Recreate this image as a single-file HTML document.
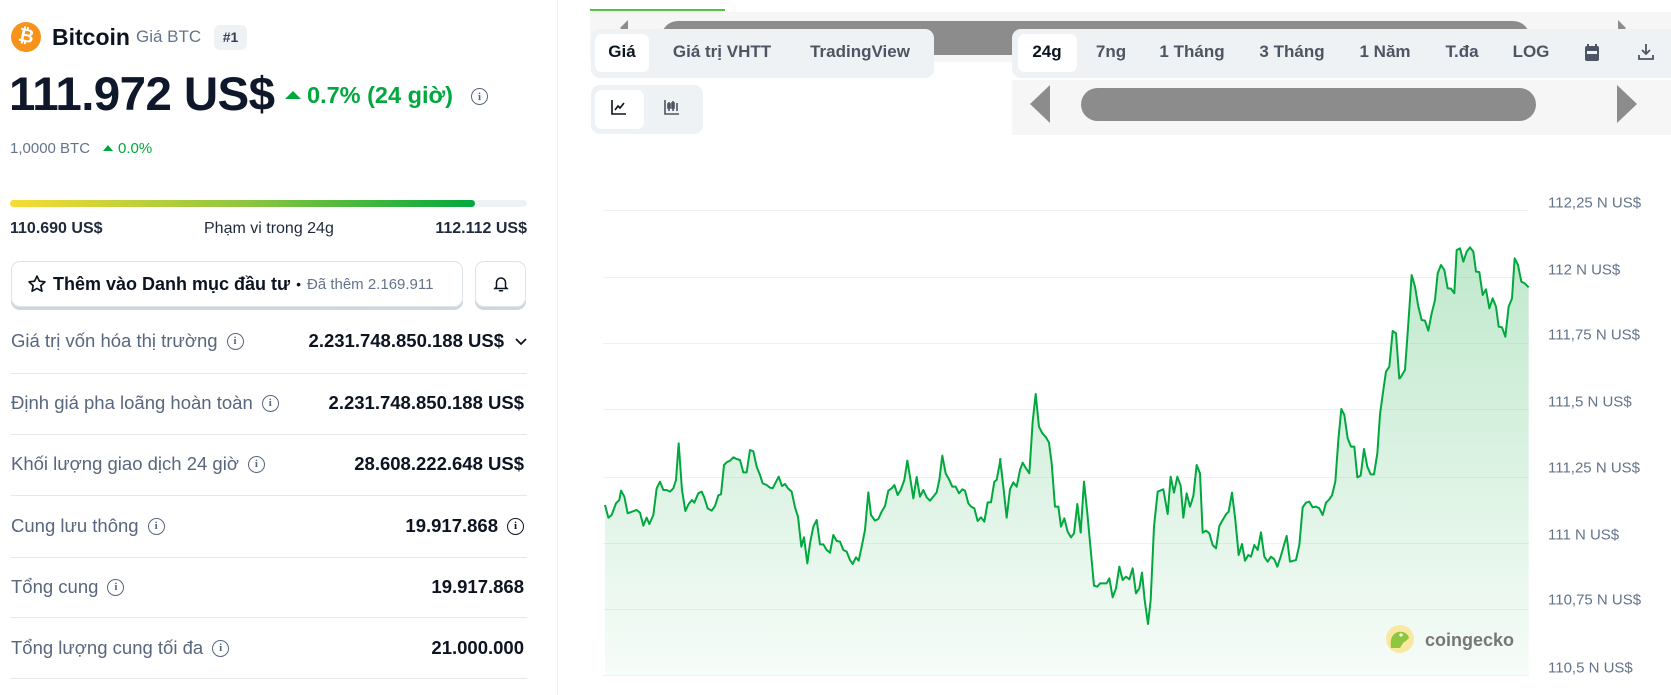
<!DOCTYPE html>
<html><head><meta charset="utf-8"><style>
*{margin:0;padding:0;box-sizing:border-box}
body{width:1671px;height:695px;overflow:hidden;background:#fff;font-family:"Liberation Sans",sans-serif;color:#0d1421;position:relative}
.a{position:absolute;white-space:nowrap}
.lbl{font-size:18.5px;color:#58667e;display:flex;align-items:center;gap:9px}
.val{font-size:18.5px;font-weight:bold;color:#0d1421;right:1147px;display:flex;align-items:center;gap:9px}
.info{width:17px;height:17px;border:1.6px solid #58667e;border-radius:50%;font-size:11px;font-weight:bold;color:#58667e;display:inline-flex;align-items:center;justify-content:center;font-family:"Liberation Serif",serif}
.hr{position:absolute;left:11px;width:516px;height:1px;background:#e5e8ec}
.tab{position:absolute;font-size:17px;color:#4b5563;transform:translateX(-50%);top:42px}
.yl{position:absolute;left:1548px;font-size:15px;color:#64748b;transform:translateY(-50%)}
.grid{position:absolute;left:603px;width:926px;height:1px;background:rgba(120,140,150,0.12)}
</style></head><body>
<!-- header -->
<div class="a" style="left:11px;top:22px;width:30px;height:30px;border-radius:50%;background:#f7931a;color:#fff;font-weight:bold;font-size:19px;text-align:center;line-height:30px;transform:rotate(12deg)">₿</div>
<div class="a" style="left:52px;top:24px;font-size:23px;font-weight:bold">Bitcoin</div>
<div class="a" style="left:136px;top:27px;font-size:17px;color:#64748b">Giá BTC</div>
<div class="a" style="left:214px;top:25px;width:33px;height:25px;background:#eff2f5;border-radius:6px;font-size:14px;font-weight:bold;color:#334155;text-align:center;line-height:25px">#1</div>
<div class="a" style="left:9px;top:67px;font-size:47.5px;font-weight:bold;letter-spacing:-0.6px;color:#0f172a">111.972 US$</div>
<div class="a" style="left:285px;top:91px;width:0;height:0;border-left:8px solid transparent;border-right:8px solid transparent;border-bottom:8px solid #00a83e"></div>
<div class="a" style="left:307px;top:82px;font-size:23.5px;font-weight:bold;color:#00a83e">0.7% (24 giờ)</div>
<div class="a info" style="left:471px;top:88px">i</div>
<div class="a" style="left:10px;top:140px;font-size:15px;color:#64748b">1,0000 BTC</div>
<div class="a" style="left:103px;top:145px;width:0;height:0;border-left:5px solid transparent;border-right:5px solid transparent;border-bottom:6px solid #00a83e"></div>
<div class="a" style="left:118px;top:140px;font-size:15px;color:#00a83e">0.0%</div>
<!-- range -->
<div class="a" style="left:10px;top:200px;width:517px;height:7px;border-radius:4px;background:#eff2f5"></div>
<div class="a" style="left:10px;top:200px;width:465px;height:7px;border-radius:4px;background:linear-gradient(90deg,#f8dc34,#8fc63f 50%,#00a83e)"></div>
<div class="a" style="left:10px;top:220px;font-size:16px;font-weight:bold;color:#1e293b">110.690 US$</div>
<div class="a" style="left:204px;top:220px;font-size:16px;color:#1e293b">Phạm vi trong 24g</div>
<div class="a" style="right:1144px;top:220px;font-size:16px;font-weight:bold;color:#1e293b">112.112 US$</div>
<!-- buttons -->
<div class="a" style="left:11px;top:261px;width:452px;height:46px;border:1.5px solid #dfe3ea;border-radius:9px;box-shadow:0 3px 0 #cfd6df;display:flex;align-items:center;padding-left:15px;gap:6px">
<svg width="20" height="20" viewBox="0 0 24 24"><path d="M12 2.5l2.9 6.1 6.6.8-4.9 4.6 1.3 6.6L12 17.3l-5.9 3.3 1.3-6.6-4.9-4.6 6.6-.8z" fill="none" stroke="#0d1421" stroke-width="2" stroke-linejoin="round"/></svg>
<span style="font-size:18px;font-weight:bold">Thêm vào Danh mục đầu tư</span><span style="font-size:14px;color:#0d1421">•</span><span style="font-size:15px;color:#64748b">Đã thêm 2.169.911</span></div>
<div class="a" style="left:475px;top:261px;width:51px;height:46px;border:1.5px solid #dfe3ea;border-radius:9px;box-shadow:0 3px 0 #cfd6df;display:flex;align-items:center;justify-content:center">
<svg width="18" height="18" viewBox="0 0 24 24" fill="none" stroke="#0d1421" stroke-width="2" stroke-linecap="round"><path d="M6 16V10a6 6 0 0112 0v6l2 2H4z"/><path d="M10 21h4"/></svg></div>
<!-- stats -->
<div class="a lbl" style="left:11px;top:330px">Giá trị vốn hóa thị trường <span class="info">i</span></div>
<div class="a val" style="top:330px;right:1142px">2.231.748.850.188 US$ <svg width="16" height="16" viewBox="0 0 16 16"><path d="M3 6l5 5 5-5" fill="none" stroke="#0d1421" stroke-width="1.8"/></svg></div>
<div class="hr" style="top:373px"></div>
<div class="a lbl" style="left:11px;top:392px">Định giá pha loãng hoàn toàn <span class="info">i</span></div>
<div class="a val" style="top:392px">2.231.748.850.188 US$</div>
<div class="hr" style="top:434px"></div>
<div class="a lbl" style="left:11px;top:453px">Khối lượng giao dịch 24 giờ <span class="info">i</span></div>
<div class="a val" style="top:453px">28.608.222.648 US$</div>
<div class="hr" style="top:495px"></div>
<div class="a lbl" style="left:11px;top:515px">Cung lưu thông <span class="info">i</span></div>
<div class="a val" style="top:515px">19.917.868 <span class="info" style="border-color:#0d1421;color:#0d1421">i</span></div>
<div class="hr" style="top:557px"></div>
<div class="a lbl" style="left:11px;top:576px">Tổng cung <span class="info">i</span></div>
<div class="a val" style="top:576px">19.917.868</div>
<div class="hr" style="top:617px"></div>
<div class="a lbl" style="left:11px;top:637px">Tổng lượng cung tối đa <span class="info">i</span></div>
<div class="a val" style="top:637px">21.000.000</div>
<div class="hr" style="top:678px"></div>
<div class="a" style="left:557px;top:0;width:1px;height:695px;background:#eef0f3"></div>
<!-- top scroll bar -->
<div class="a" style="left:590px;top:9px;width:135px;height:2px;background:#4cc93b"></div>
<div class="a" style="left:590px;top:12px;width:1081px;height:50px;background:#f6f6f6"></div>
<div class="a" style="left:661px;top:21px;width:869px;height:34px;border-radius:17px;background:#8c8c8c"></div>
<div class="a" style="left:620px;top:20px;width:0;height:0;border-top:8px solid transparent;border-bottom:8px solid transparent;border-right:8px solid #8c8c8c"></div>
<div class="a" style="left:1618px;top:20px;width:0;height:0;border-top:8px solid transparent;border-bottom:8px solid transparent;border-left:8px solid #8c8c8c"></div>
<!-- tab group 1 -->
<div class="a" style="left:591px;top:29px;width:343px;height:49px;background:#eff2f5;border-radius:9px"></div>
<div class="a" style="left:595px;top:34px;width:54px;height:38px;background:#fff;border-radius:7px"></div>
<div class="tab" style="left:622px;color:#0d1421;font-weight:bold">Giá</div>
<div class="tab" style="left:722px;font-weight:bold">Giá trị VHTT</div>
<div class="tab" style="left:860px;font-weight:bold">TradingView</div>
<div class="a" style="left:591px;top:85px;width:112px;height:49px;background:#eff2f5;border-radius:9px"></div>
<div class="a" style="left:595px;top:90px;width:49px;height:39px;background:#fff;border-radius:7px"></div>
<svg class="a" style="left:609px;top:97px" width="20" height="20" viewBox="0 0 20 20" fill="none" stroke="#0d1421" stroke-width="1.6"><path d="M3 3v14h14"/><path d="M6 13l3-4 2 2 4-5"/></svg>
<svg class="a" style="left:662px;top:97px" width="20" height="20" viewBox="0 0 20 20" fill="none" stroke="#4b5563" stroke-width="1.6"><path d="M3 3v14h14"/><path d="M7 5v9M11 4v10M15 6v8"/><rect x="6" y="7" width="2" height="4" fill="#4b5563"/><rect x="10" y="6" width="2" height="5" fill="#4b5563"/></svg>
<!-- timeframe group -->
<div class="a" style="left:1012px;top:29px;width:659px;height:49px;background:#eff2f5;border-radius:9px 0 0 9px"></div>
<div class="a" style="left:1018px;top:34px;width:59px;height:38px;background:#fff;border-radius:7px"></div>
<div class="tab" style="left:1047px;color:#0d1421;font-weight:bold">24g</div>
<div class="tab" style="left:1111px;font-weight:bold">7ng</div>
<div class="tab" style="left:1192px;font-weight:bold">1 Tháng</div>
<div class="tab" style="left:1292px;font-weight:bold">3 Tháng</div>
<div class="tab" style="left:1385px;font-weight:bold">1 Năm</div>
<div class="tab" style="left:1462px;font-weight:bold">T.đa</div>
<div class="tab" style="left:1531px;font-weight:bold">LOG</div>
<svg class="a" style="left:1583px;top:43px" width="18" height="20" viewBox="0 0 18 20"><rect x="2" y="3" width="14" height="15" rx="2" fill="#4b5563"/><rect x="4" y="8" width="10" height="3" fill="#eff2f5"/><path d="M5 1v4M13 1v4" stroke="#4b5563" stroke-width="2"/></svg>
<svg class="a" style="left:1636px;top:42px" width="20" height="20" viewBox="0 0 20 20" fill="none" stroke="#4b5563" stroke-width="1.8"><path d="M10 2v10M6 8l4 4 4-4M3 13v4h14v-4"/></svg>
<div class="a" style="left:1012px;top:80px;width:659px;height:55px;background:#f6f6f6"></div>
<div class="a" style="left:1030px;top:85px;width:0;height:0;border-top:19px solid transparent;border-bottom:19px solid transparent;border-right:20px solid #8c8c8c"></div>
<div class="a" style="left:1081px;top:88px;width:455px;height:33px;border-radius:17px;background:#8c8c8c"></div>
<div class="a" style="left:1617px;top:85px;width:0;height:0;border-top:19px solid transparent;border-bottom:19px solid transparent;border-left:20px solid #8c8c8c"></div>
<div class="yl" style="top:203px">112,25 N US$</div>
<div class="yl" style="top:270px">112 N US$</div>
<div class="yl" style="top:335px">111,75 N US$</div>
<div class="yl" style="top:402px">111,5 N US$</div>
<div class="yl" style="top:468px">111,25 N US$</div>
<div class="yl" style="top:535px">111 N US$</div>
<div class="yl" style="top:600px">110,75 N US$</div>
<div class="yl" style="top:668px">110,5 N US$</div>
<svg class="a" style="left:0;top:0" width="1671" height="695">
<defs>
<linearGradient id="g1" gradientUnits="userSpaceOnUse" x1="0" y1="60" x2="0" y2="1365"><stop offset="0" stop-color="#bfe8cc"/><stop offset="1" stop-color="#f6fcf8"/></linearGradient>
<linearGradient id="g3" gradientUnits="userSpaceOnUse" x1="0" y1="210" x2="0" y2="1515"><stop offset="0" stop-color="#bfe8cc"/><stop offset="1" stop-color="#f6fcf8"/></linearGradient>
</defs>
<g transform="translate(560,220) scale(0.33333)">
<polygon fill="url(#g1)" points="135,1365 135,855 145,893 155,885 168,850 178,840 183,812 193,830 203,880 230,870 240,878 250,917 260,893 268,912 280,885 290,805 300,785 310,810 320,810 330,815 340,805 348,780 356,670 366,810 376,873 386,852 396,840 403,848 415,820 425,815 432,830 443,865 455,872 465,858 475,826 483,823 492,735 500,727 510,722 520,712 530,717 540,720 550,757 560,757 570,690 580,694 590,740 600,765 608,790 620,795 630,803 638,805 656,770 666,798 675,792 684,805 695,815 705,862 714,890 724,980 732,952 742,1030 750,970 760,920 770,900 780,973 790,973 800,990 810,998 820,945 830,963 840,965 850,990 860,995 870,1020 878,1032 888,1012 896,1022 905,980 915,930 925,817 933,885 945,902 955,897 965,875 975,858 985,812 995,805 1003,795 1013,825 1023,808 1033,780 1042,722 1050,770 1060,835 1070,771 1080,830 1090,810 1100,832 1110,842 1120,830 1130,817 1138,780 1147,707 1157,760 1167,778 1177,800 1187,800 1197,820 1207,808 1215,812 1225,850 1233,860 1243,865 1253,903 1263,892 1273,905 1283,847 1293,847 1303,785 1310,780 1322,715 1330,760 1330,1365"/>
</g>
<g transform="translate(1000,220) scale(0.33333)">
<polygon fill="url(#g1)" points="0,1365 0,715 10,800 20,893 30,808 40,787 50,800 60,750 68,728 78,745 88,760 98,605 107,522 117,620 127,640 138,652 147,668 155,730 165,860 175,860 183,920 193,895 203,935 213,952 222,940 232,852 242,938 252,785 262,880 282,1097 292,1100 300,1090 320,1090 328,1075 338,1132 348,1105 358,1040 368,1080 378,1070 388,1078 398,1045 408,1120 418,1105 426,1058 434,1140 444,1212 452,1140 462,920 473,815 490,808 503,882 512,770 522,818 532,770 542,797 550,893 560,820 570,860 580,828 590,735 600,760 608,938 618,932 628,940 638,975 648,985 658,918 668,900 678,883 686,875 696,818 706,900 716,1005 726,972 735,1022 745,1005 753,1010 763,975 773,990 783,937 793,1010 803,1025 813,1010 823,1018 832,1040 842,1010 852,975 860,948 870,1025 888,1020 898,975 908,862 918,848 928,845 938,862 948,860 958,865 968,885 978,848 988,838 996,826 1006,785 1015,660 1024,567 1033,585 1043,655 1053,680 1063,680 1072,772 1082,767 1092,687 1102,740 1112,763 1122,763 1132,700 1140,583 1150,510 1158,455 1168,440 1178,333 1188,340 1198,478 1206,470 1206,1365"/>
</g>
<g transform="translate(1400,170) scale(0.33333)">
<polygon fill="url(#g3)" points="0,1515 0,625 15,600 25,460 35,315 45,350 55,410 65,450 75,452 85,482 95,430 105,390 113,310 123,285 133,300 143,355 153,356 163,370 170,240 180,235 190,275 200,245 210,232 220,245 228,305 238,306 248,375 258,358 268,415 278,385 288,410 296,470 306,472 316,500 326,410 336,385 344,265 354,285 364,335 374,340 386,352 386,1515"/>
</g>
<g fill="#8ca0aa" fill-opacity="0.14">
<rect x="603" y="210" width="926" height="1"/><rect x="603" y="277" width="926" height="1"/><rect x="603" y="343" width="926" height="1"/><rect x="603" y="409" width="926" height="1"/><rect x="603" y="477" width="926" height="1"/><rect x="603" y="543" width="926" height="1"/><rect x="603" y="609" width="926" height="1"/><rect x="603" y="675" width="926" height="1"/>
</g>
<g transform="translate(560,220) scale(0.33333)">
<polyline fill="none" stroke="#00a83e" stroke-width="6" stroke-linejoin="round" points="135,855 145,893 155,885 168,850 178,840 183,812 193,830 203,880 230,870 240,878 250,917 260,893 268,912 280,885 290,805 300,785 310,810 320,810 330,815 340,805 348,780 356,670 366,810 376,873 386,852 396,840 403,848 415,820 425,815 432,830 443,865 455,872 465,858 475,826 483,823 492,735 500,727 510,722 520,712 530,717 540,720 550,757 560,757 570,690 580,694 590,740 600,765 608,790 620,795 630,803 638,805 656,770 666,798 675,792 684,805 695,815 705,862 714,890 724,980 732,952 742,1030 750,970 760,920 770,900 780,973 790,973 800,990 810,998 820,945 830,963 840,965 850,990 860,995 870,1020 878,1032 888,1012 896,1022 905,980 915,930 925,817 933,885 945,902 955,897 965,875 975,858 985,812 995,805 1003,795 1013,825 1023,808 1033,780 1042,722 1050,770 1060,835 1070,771 1080,830 1090,810 1100,832 1110,842 1120,830 1130,817 1138,780 1147,707 1157,760 1167,778 1177,800 1187,800 1197,820 1207,808 1215,812 1225,850 1233,860 1243,865 1253,903 1263,892 1273,905 1283,847 1293,847 1303,785 1310,780 1322,715"/>
</g>
<g transform="translate(1000,220) scale(0.33333)">
<polyline fill="none" stroke="#00a83e" stroke-width="6" stroke-linejoin="round" points="0,715 10,800 20,893 30,808 40,787 50,800 60,750 68,728 78,745 88,760 98,605 107,522 117,620 127,640 138,652 147,668 155,730 165,860 175,860 183,920 193,895 203,935 213,952 222,940 232,852 242,938 252,785 262,880 282,1097 292,1100 300,1090 320,1090 328,1075 338,1132 348,1105 358,1040 368,1080 378,1070 388,1078 398,1045 408,1120 418,1105 426,1058 434,1140 444,1212 452,1140 462,920 473,815 490,808 503,882 512,770 522,818 532,770 542,797 550,893 560,820 570,860 580,828 590,735 600,760 608,938 618,932 628,940 638,975 648,985 658,918 668,900 678,883 686,875 696,818 706,900 716,1005 726,972 735,1022 745,1005 753,1010 763,975 773,990 783,937 793,1010 803,1025 813,1010 823,1018 832,1040 842,1010 852,975 860,948 870,1025 888,1020 898,975 908,862 918,848 928,845 938,862 948,860 958,865 968,885 978,848 988,838 996,826 1006,785 1015,660 1024,567 1033,585 1043,655 1053,680 1063,680 1072,772 1082,767 1092,687 1102,740 1112,763 1122,763 1132,700 1140,583 1150,510 1158,455 1168,440 1178,333 1188,340 1198,478"/>
</g>
<g transform="translate(1400,170) scale(0.33333)">
<polyline fill="none" stroke="#00a83e" stroke-width="6" stroke-linejoin="round" points="0,625 15,600 25,460 35,315 45,350 55,410 65,450 75,452 85,482 95,430 105,390 113,310 123,285 133,300 143,355 153,356 163,370 170,240 180,235 190,275 200,245 210,232 220,245 228,305 238,306 248,375 258,358 268,415 278,385 288,410 296,470 306,472 316,500 326,410 336,385 344,265 354,285 364,335 374,340 386,352"/>
</g>
<circle cx="1400" cy="639" r="14" fill="#f9e9a0"/>
<path d="M1391 648c-1-7 0-14 7-16 6-1 10 2 11 6l-3 3c-3 1-4 4-6 7z" fill="#8dc63f"/>
<circle cx="1401" cy="635" r="1.6" fill="#fff"/>
<text x="1425" y="646" font-family="Liberation Sans" font-weight="bold" font-size="18" fill="#777">coingecko</text>
</svg>
</body></html>
